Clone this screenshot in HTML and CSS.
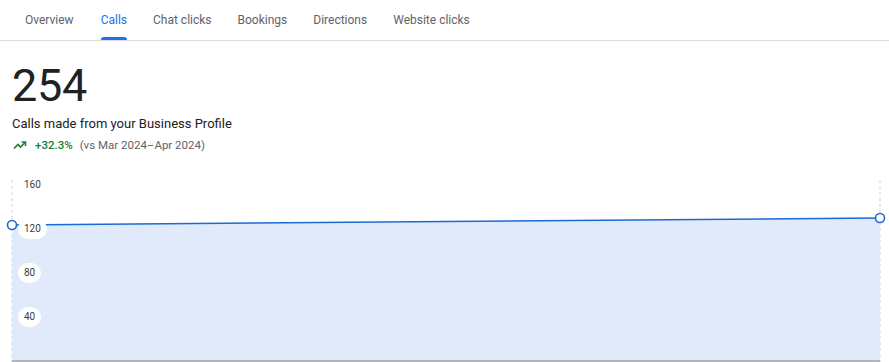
FILE: index.html
```html
<!DOCTYPE html>
<html>
<head>
<meta charset="utf-8">
<link rel="stylesheet" href="styles.css">
</head>
<body>
<nav class="tabs">
  <div class="tab">Overview</div>
  <div class="tab active">Calls</div>
  <div class="tab">Chat clicks</div>
  <div class="tab">Bookings</div>
  <div class="tab">Directions</div>
  <div class="tab">Website clicks</div>
</nav>
<section class="summary">
  <div class="big">254</div>
  <div class="desc">Calls made from your Business Profile</div>
  <div class="trend">
    <svg class="trend-icon" width="14" height="10" viewBox="0 0 14 10"><path d="M1 8.5 L5 4.5 L7.5 7 L12 2.5" fill="none" stroke="#188038" stroke-width="1.6"/><path d="M8.5 2 L12.5 2 L12.5 6" fill="none" stroke="#188038" stroke-width="1.6"/></svg>
    <span class="pct">+32.3%</span>
    <span class="vs">(vs Mar 2024–Apr 2024)</span>
  </div>
</section>
<div class="chart">
  <svg class="chart-svg" width="889" height="182" viewBox="0 0 889 182">
    <line x1="12" y1="0" x2="12" y2="182" stroke="#d0d3d8" stroke-dasharray="3 3" stroke-width="1"/>
    <line x1="880" y1="0" x2="880" y2="182" stroke="#d0d3d8" stroke-dasharray="3 3" stroke-width="1"/>
    <polygon points="12,45 880,38 880,181 12,181" fill="#e1eafa"/>
    <line x1="12" y1="45" x2="880" y2="38" stroke="#1a6ad6" stroke-width="1.6"/>
    <line x1="12" y1="181" x2="880" y2="181" stroke="#9aa0a6" stroke-width="1.5"/>
    <circle cx="12" cy="45" r="4.5" fill="#fff" stroke="#1a6ad6" stroke-width="1.6"/>
    <circle cx="880" cy="38" r="4.5" fill="#fff" stroke="#1a6ad6" stroke-width="1.6"/>
  </svg>
  <div class="ylabels">
    <span class="yl yl-top">160</span>
    <span class="yl">120</span>
    <span class="yl">80</span>
    <span class="yl">40</span>
  </div>
</div>
</body>
</html>
```
FILE: styles.css
```css
html, body {
  margin: 0;
  padding: 0;
  background: #fff;
  font-family: Roboto, "Liberation Sans", Arial, sans-serif;
  color: #202124;
  overflow: hidden;
}
.tabs {
  display: flex;
  height: 40px;
  padding-left: 12px;
  border-bottom: 1px solid #dadce0;
}
.tab {
  position: relative;
  padding: 0 13px;
  font-size: 12px;
  line-height: 40px;
  color: #5f6368;
}
.tab:first-child {
  padding-right: 14px;
}
.tab.active {
  color: #1a73e8;
}
.tab.active::after {
  content: "";
  position: absolute;
  left: 13px;
  right: 13px;
  bottom: 0;
  height: 3px;
  border-radius: 3px 3px 0 0;
  background: #1a73e8;
}
.summary {
  padding: 17px 12px 0 12px;
}
.big {
  font-size: 45px;
  line-height: 56px;
  color: #202124;
  letter-spacing: -0.3px;
}
.desc {
  font-size: 13px;
  line-height: 22px;
  color: #202124;
  margin-top: -1px;
}
.trend {
  display: flex;
  align-items: center;
  height: 20px;
  font-size: 11.5px;
  padding-left: 1px;
}
.trend-icon {
  margin-right: 8px;
}
.pct {
  color: #188038;
  font-weight: 500;
  margin-right: 7px;
}
.vs {
  color: #5f6368;
}
.chart {
  position: relative;
  margin-top: 25px;
  height: 182px;
}
.chart-svg {
  display: block;
}
.ylabels {
  position: absolute;
  left: 18px;
  top: -5px;
  display: flex;
  flex-direction: column;
  gap: 24px;
}
.yl {
  display: block;
  height: 20px;
  line-height: 20px;
  padding: 0 6px;
  border-radius: 10px;
  background: #fff;
  font-size: 10px;
  color: #3c4043;
  width: max-content;
}
.yl-top {
  background: transparent;
}
```
